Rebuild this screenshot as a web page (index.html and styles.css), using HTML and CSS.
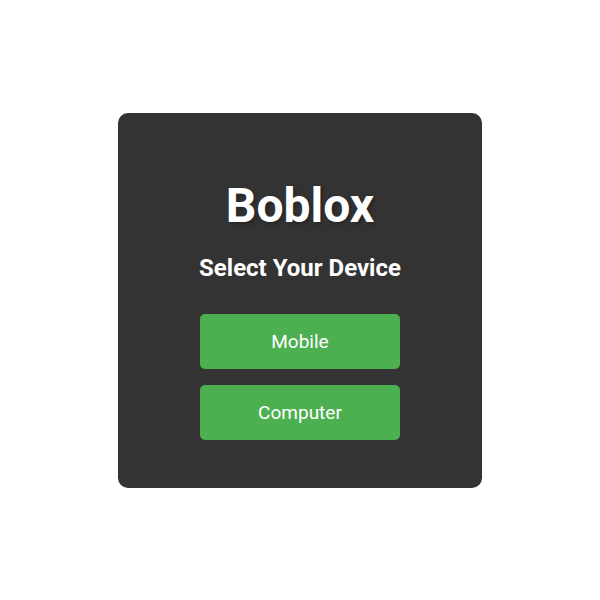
FILE: index.html
```html
<!DOCTYPE html>
<html lang="en">
<head>
<meta charset="utf-8">
<title>Boblox</title>
<link rel="stylesheet" href="styles.css">
</head>
<body>
<main class="card">
<h1 class="title">Boblox</h1>
<h2 class="subtitle">Select Your Device</h2>
<div class="choices">
<button class="choice" type="button">Mobile</button>
<button class="choice" type="button">Computer</button>
</div>
</main>
</body>
</html>
```

FILE: styles.css
```css
* {
  box-sizing: border-box;
}

body {
  display: flex;
  align-items: center;
  justify-content: center;
  min-height: 100vh;
  margin: 0;
  background: #fff;
  color: #fff;
  font-family: Roboto, sans-serif;
}

.card {
  padding: 65px 81px 48px;
  border-radius: 10px;
  background: #333;
  text-align: center;
}

.title {
  margin: 0 0 20px;
  font-size: 48px;
  line-height: 56px;
  text-shadow: 2px 2px 4px rgba(0, 0, 0, 0.3);
}

.subtitle {
  margin: 0 0 32px;
  font-size: 24px;
  line-height: 28px;
}

.choices {
  display: flex;
  flex-direction: column;
  align-items: center;
  gap: 16px;
}

.choice {
  width: 200px;
  padding: 16px;
  border: 0;
  border-radius: 5px;
  background: #4caf50;
  color: #fff;
  font-family: inherit;
  font-size: 19px;
  line-height: 23px;
  cursor: pointer;
}
```
